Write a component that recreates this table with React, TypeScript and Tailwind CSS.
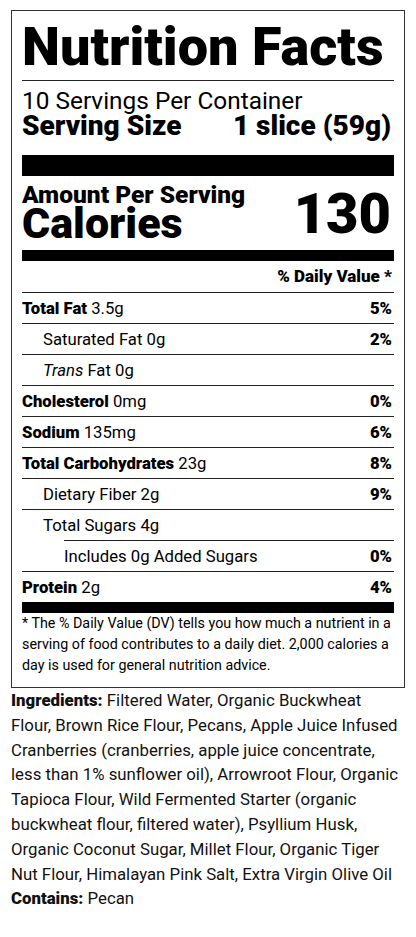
import React from "react";

const rows: { label: string; bold?: boolean; italic?: string; value: string; dv?: string; indent: number; lineIndent?: number }[] = [
  { label: "Total Fat", bold: true, value: "3.5g", dv: "5%", indent: 0 },
  { label: "Saturated Fat", value: "0g", dv: "2%", indent: 1 },
  { label: "Fat", italic: "Trans", value: "0g", indent: 1 },
  { label: "Cholesterol", bold: true, value: "0mg", dv: "0%", indent: 0 },
  { label: "Sodium", bold: true, value: "135mg", dv: "6%", indent: 0 },
  { label: "Total Carbohydrates", bold: true, value: "23g", dv: "8%", indent: 0 },
  { label: "Dietary Fiber", value: "2g", dv: "9%", indent: 1 },
  { label: "Total Sugars", value: "4g", indent: 1 },
  { label: "Includes 0g Added Sugars", value: "", dv: "0%", indent: 2, lineIndent: 2 },
  { label: "Protein", bold: true, value: "2g", dv: "4%", indent: 0 },
];

const ingredientLines = [
  "Flour, Brown Rice Flour, Pecans, Apple Juice Infused",
  "Cranberries (cranberries, apple juice concentrate,",
  "less than 1% sunflower oil), Arrowroot Flour, Organic",
  "Tapioca Flour, Wild Fermented Starter (organic",
  "buckwheat flour, filtered water), Psyllium Husk,",
  "Organic Coconut Sugar, Millet Flour, Organic Tiger",
  "Nut Flour, Himalayan Pink Salt, Extra Virgin Olive Oil",
];

export default function App() {
  return (
    <div
      className="bg-white text-black px-[11px] pt-[10px] pb-[30px] w-[416px]"
      style={{ fontFamily: "Roboto, 'Liberation Sans', sans-serif" }}
    >
      <div className="border border-[#333] px-[10px] pb-[11px]">
        <h1 className="pt-[11px] text-[54px] leading-[49px] font-black whitespace-nowrap">Nutrition Facts</h1>
        <div className="mt-[9px] h-px bg-[#222]" />
        <p className="mt-[8px] text-[24.4px] leading-[24px] whitespace-nowrap">10 Servings Per Container</p>
        <div className="flex justify-between text-[28px] leading-[26px] font-black whitespace-nowrap">
          <span>Serving Size</span>
          <span className="pr-[3px]">1 slice (59g)</span>
        </div>
        <div className="mt-[16px] h-[21px] bg-black" />
        <div className="flex items-start justify-between">
          <div className="pt-[7px]">
            <div className="text-[24.5px] leading-[23px] font-black whitespace-nowrap">Amount Per Serving</div>
            <div className="mt-[4px] text-[43px] leading-[26px] font-black whitespace-nowrap">Calories</div>
          </div>
          <div className="pt-[10px] text-[56px] leading-[56px] font-black pr-[3px]">130</div>
        </div>
        <div className="mt-[8px] h-[11px] bg-black" />
        <div className="text-right text-[17px] leading-[31px] font-black pr-[2px]">% Daily Value *</div>
        {rows.map((r, i) => (
          <div key={i}>
            <div
              className={
                r.lineIndent === 2 ? "ml-[42px] h-px bg-[#222]" : "h-px bg-[#222]"
              }
            />
            <div className="flex justify-between h-[30px] pt-[1px] text-[16.7px] leading-[29px] whitespace-nowrap">
              <span
                className={
                  r.indent === 2 ? "pl-[42px]" : r.indent === 1 ? "pl-[21px]" : ""
                }
              >
                {r.italic ? <span className="italic">{r.italic} </span> : null}
                {r.bold ? <span className="font-black">{r.label}</span> : <span>{r.label}</span>}
                {r.value ? <span> {r.value}</span> : null}
              </span>
              {r.dv ? <span className="font-black pr-[2px]">{r.dv}</span> : null}
            </div>
          </div>
        ))}
        <div className="h-[11px] bg-black" />
        <p className="text-[14.3px] leading-[21px]">
          * The % Daily Value (DV) tells you how much a nutrient in a serving of food contributes to a daily diet. 2,000 calories a day is used for general nutrition advice.
        </p>
      </div>
      <div className="text-[16.8px] leading-[24.8px] text-[#111]">
        <span className="block whitespace-nowrap">
          <span className="font-black">Ingredients:</span> Filtered Water, Organic Buckwheat
        </span>
        {ingredientLines.map((l, i) => (
          <span key={i} className="block whitespace-nowrap">{l}</span>
        ))}
        <span className="block whitespace-nowrap">
          <span className="font-black">Contains:</span> Pecan
        </span>
      </div>
    </div>
  );
}
